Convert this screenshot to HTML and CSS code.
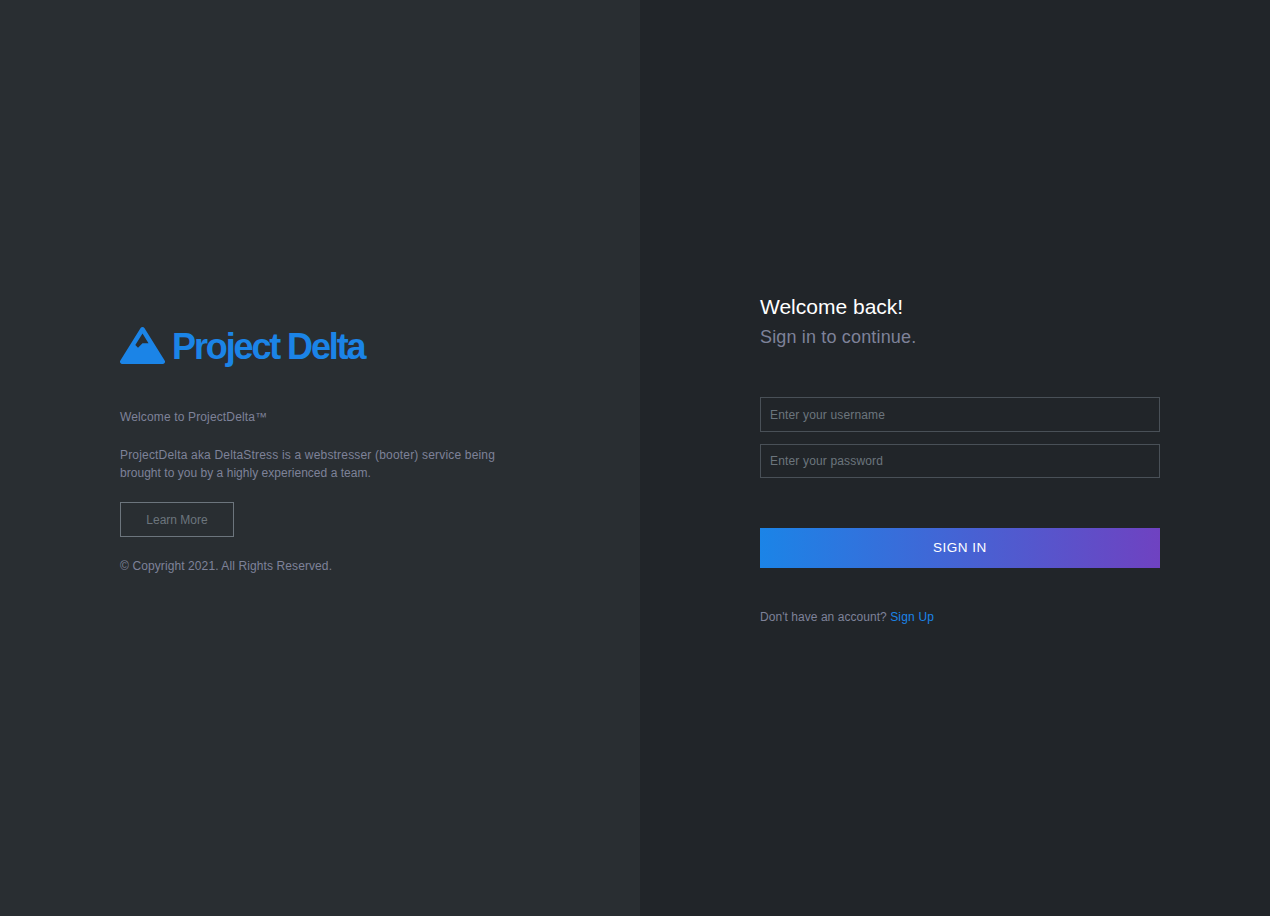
FILE: index.html
```html
<!DOCTYPE html>
<html lang="en">
<head>
<meta charset="utf-8">
<title>Project Delta - Sign In</title>
<link rel="stylesheet" href="styles.css">
</head>
<body>
<div class="page">
  <section class="about">
    <h1 class="brand">
      <svg class="brand-icon" viewBox="0 0 640 512" preserveAspectRatio="none" aria-hidden="true"><path fill="currentColor" d="M634.92 462.7l-288-448C341.03 5.54 330.89 0 320 0s-21.03 5.54-26.92 14.7l-288 448a32 32 0 0 0-1.17 32.64A32 32 0 0 0 32 512h576c11.71 0 22.48-6.39 28.09-16.67a31.98 31.98 0 0 0-1.17-32.63zM320 91.18L405.39 224H320l-64 64-38.06-38.06L320 91.18z"/></svg>
      <span class="brand-name">Project Delta</span>
    </h1>
    <p class="welcome">Welcome to ProjectDelta™</p>
    <p class="description"><span class="intro">ProjectDelta aka DeltaStress is a webstresser (booter) service being</span><br>brought to you by a highly experienced a team.</p>
    <a class="learn-more">Learn More</a>
    <p class="copyright">© Copyright 2021. All Rights Reserved.</p>
  </section>
  <main class="signin">
    <h2 class="title">Welcome back!</h2>
    <h3 class="subtitle">Sign in to continue.</h3>
    <form class="form">
      <input class="field username" type="text" placeholder="Enter your username">
      <input class="field password" type="password" placeholder="Enter your password">
      <button class="submit" type="button">SIGN IN</button>
    </form>
    <p class="signup"><span class="question">Don't have an account?</span> <a class="signup-link">Sign Up</a></p>
  </main>
</div>
</body>
</html>
```
FILE: styles.css
```css
* { box-sizing: border-box; }
body {
  margin: 0;
  background: #212529;
  color: #7e8299;
  font: 12px/18px "Liberation Sans", Arial, sans-serif;
}
h1, h2, h3, p { margin: 0; }
.page { display: flex; height: 916px; overflow: hidden; }
.about { width: 640px; padding: 327px 120px 0; background: #292e32; }
.brand {
  display: flex;
  height: 40px;
  color: #1b84e7;
  font-size: 36px;
  line-height: 40px;
}
.brand-icon { width: 45px; height: 37px; margin-right: 7px; }
.brand-name { letter-spacing: -2.12px; white-space: nowrap; }
.welcome { margin-top: 41px; letter-spacing: 0.14px; }
.description { margin-top: 20px; letter-spacing: 0.03px; white-space: nowrap; }
.intro { letter-spacing: 0.18px; }
.learn-more {
  display: block;
  width: 114px;
  height: 35px;
  margin-top: 20px;
  border: 1px solid #6c757d;
  color: #6c757d;
  line-height: 34px;
  text-align: center;
}
.copyright { margin-top: 20px; letter-spacing: 0.1px; }
.signin { width: 630px; padding: 294px 110px 0 120px; }
.title { color: #fff; font-size: 21px; line-height: 26px; font-weight: 400; }
.subtitle { margin-top: 5px; font-size: 18px; line-height: 24px; font-weight: 400; letter-spacing: 0.16px; }
.form { display: flex; flex-direction: column; margin-top: 48px; }
.field {
  width: 400px;
  padding: 0 9px;
  border: 1px solid #495057;
  border-radius: 0;
  background: transparent;
  color: #fff;
  font: inherit;
  letter-spacing: 0.16px;
}
.field::placeholder { color: #6c757d; opacity: 1; }
.username { height: 35px; }
.password { height: 34px; margin-top: 12px; }
.submit {
  height: 40px;
  margin-top: 50px;
  padding: 0;
  border: 0;
  background: linear-gradient(to right, #1b84e7, #6f42c1);
  color: #fff;
  font: 13.5px/38px "Liberation Sans", Arial, sans-serif;
  letter-spacing: 0.5px;
}
.signup { margin-top: 40px; }
.question { letter-spacing: 0.05px; }
.signup-link { color: #1b84e7; letter-spacing: 0.18px; }
```
